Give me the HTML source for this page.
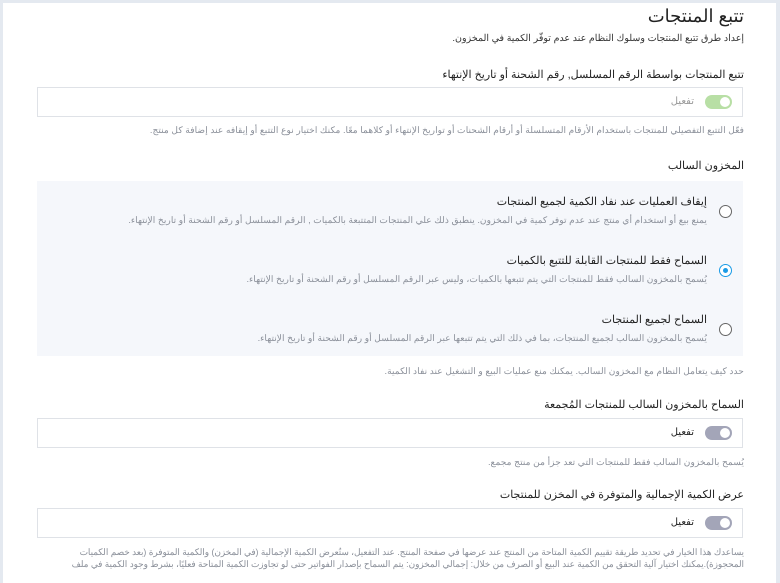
<!DOCTYPE html>
<html><head><meta charset="utf-8"><style>
*{box-sizing:border-box;margin:0;padding:0}
body{width:780px;height:569px;overflow:hidden;background:#e4e9f0;font-family:"Liberation Sans","Noto Sans CJK SC",sans-serif;direction:rtl;color:#222}
.card{position:absolute;left:3px;top:3px;width:773px;height:580px;background:#fff}
.a{position:absolute;right:32px;white-space:nowrap}
.t{font-size:18px;top:3px;color:#222}
.s{font-size:9.5px;color:#333}
.l{font-size:11px;color:#222}
.h{font-size:9.2px;color:#8a8f99}
.box{position:absolute;left:34px;width:706px;height:30px;border:1px solid #dfe2e7;background:#fff}
.tg{position:absolute;right:10px;top:7px;width:27px;height:14px;border-radius:7px;background:#a3a5b8}
.tg:after{content:"";position:absolute;right:2px;top:2px;width:10px;height:10px;border-radius:50%;background:#fff}
.tl{position:absolute;right:48px;top:8px;font-size:10px;color:#222}
.panel{position:absolute;left:34px;top:178px;width:706px;height:175px;background:#f5f7fb}
.r{position:absolute;right:11px;width:13px;height:13px;border:1.3px solid #666;border-radius:50%;background:#fff}
.r.on{border-color:#1a9be6}
.r.on:after{content:"";position:absolute;left:2.5px;top:2.5px;width:5px;height:5px;border-radius:50%;background:#1a9be6}
.rt{position:absolute;right:36px;white-space:nowrap}
</style></head><body><div class="card">
<div class="a t">تتبع المنتجات</div>
<div class="a s" style="top:30px">إعداد طرق تتبع المنتجات وسلوك النظام عند عدم توفّر الكمية في المخزون.</div>
<div class="a l" style="top:65px">تتبع المنتجات بواسطة الرقم المسلسل, رقم الشحنة أو تاريخ الإنتهاء</div>
<div class="box" style="top:84px"><div class="tg" style="background:#b8dfa5"></div><div class="tl" style="color:#999">تفعيل</div></div>
<div class="a h" style="top:122px">فعّل التتبع التفصيلي للمنتجات باستخدام الأرقام المتسلسلة أو أرقام الشحنات أو تواريخ الإنتهاء أو كلاهما معًا. مكنك اختيار نوع التتبع أو إيقافه عند إضافة كل منتج.</div>
<div class="a l" style="top:156px">المخزون السالب</div>
<div class="panel">
<div class="r" style="top:24px"></div>
<div class="rt l" style="top:14px">إيقاف العمليات عند نفاد الكمية لجميع المنتجات</div>
<div class="rt h" style="top:34px">يمنع بيع أو استخدام أي منتج عند عدم توفر كمية في المخزون. ينطبق ذلك علي المنتجات المتتبعة بالكميات , الرقم المسلسل أو رقم الشحنة أو تاريخ الإنتهاء.</div>
<div class="r on" style="top:83px"></div>
<div class="rt l" style="top:73px">السماح فقط للمنتجات القابلة للتتبع بالكميات</div>
<div class="rt h" style="top:93px">يُسمح بالمخزون السالب فقط للمنتجات التي يتم تتبعها بالكميات، وليس عبر الرقم المسلسل أو رقم الشحنة أو تاريخ الإنتهاء.</div>
<div class="r" style="top:142px"></div>
<div class="rt l" style="top:132px">السماح لجميع المنتجات</div>
<div class="rt h" style="top:152px">يُسمح بالمخزون السالب لجميع المنتجات، بما في ذلك التي يتم تتبعها عبر الرقم المسلسل أو رقم الشحنة أو تاريخ الإنتهاء.</div>
</div>
<div class="a h" style="top:363px">حدد كيف يتعامل النظام مع المخزون السالب. يمكنك منع عمليات البيع و التشغيل عند نفاد الكمية.</div>
<div class="a l" style="top:395px">السماح بالمخزون السالب للمنتجات المُجمعة</div>
<div class="box" style="top:415px"><div class="tg"></div><div class="tl">تفعيل</div></div>
<div class="a h" style="top:454px">يُسمح بالمخزون السالب فقط للمنتجات التي تعد جزأ من منتج مجمع.</div>
<div class="a l" style="top:485px">عرض الكمية الإجمالية والمتوفرة في المخزن للمنتجات</div>
<div class="box" style="top:505px"><div class="tg"></div><div class="tl">تفعيل</div></div>
<div class="a h" style="top:543px;white-space:normal;width:706px;line-height:12px;font-size:8.8px">يساعدك هذا الخيار في تحديد طريقة تقييم الكمية المتاحة من المنتج عند عرضها في صفحة المنتج. عند التفعيل، ستُعرض الكمية الإجمالية (في المخزن) والكمية المتوفرة (بعد خصم الكميات المحجوزة).يمكنك اختيار آلية التحقق من الكمية عند البيع أو الصرف من خلال: إجمالي المخزون: يتم السماح بإصدار الفواتير حتى لو تجاوزت الكمية المتاحة فعليًا، بشرط وجود الكمية في ملف</div>
</div></body></html>
